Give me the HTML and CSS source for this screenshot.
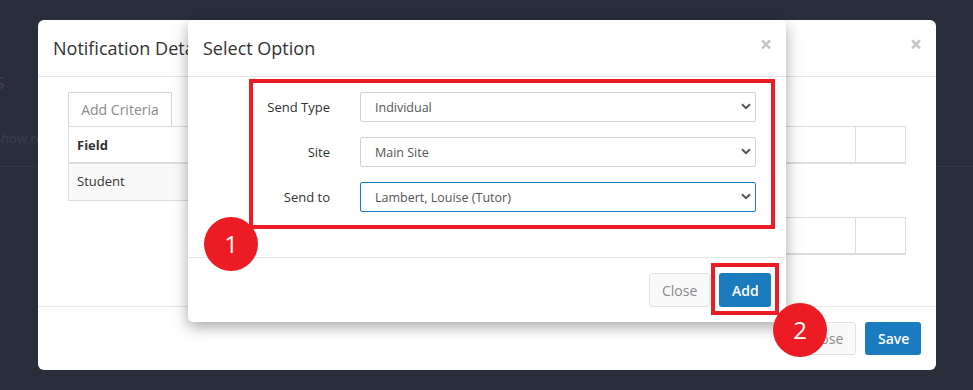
FILE: index.html
```html
<!DOCTYPE html>
<html lang="en">
<head>
    <meta charset="UTF-8">
    <meta name="viewport" content="width=device-width, initial-scale=1.0">
    <title>Notification Details - Select Option</title>
    <link rel="stylesheet" href="styles.css">
</head>
<body>

    <!-- Page behind the modals -->
    <div class="page">
        <h1 class="page-title">Notifications</h1>
        <p class="page-text">Show records</p>
        <hr class="page-rule">
    </div>

    <!-- Notification Details modal -->
    <div class="modal modal-outer">
        <div class="modal-header">
            <h4 class="modal-title">Notification Details</h4>
            <span class="close">&times;</span>
        </div>
        <div class="modal-body">
            <button class="btn btn-criteria">Add Criteria</button>
            <table class="grid grid-criteria">
                <thead>
                    <tr>
                        <th class="col-field">Field</th>
                        <th>Operator</th>
                        <th class="col-value"></th>
                        <th class="col-action"></th>
                    </tr>
                </thead>
                <tbody>
                    <tr>
                        <td class="col-field">Student</td>
                        <td class="cell-open"></td>
                        <td class="cell-open"></td>
                        <td class="cell-open"></td>
                    </tr>
                </tbody>
            </table>
            <table class="grid grid-recipients">
                <thead>
                    <tr>
                        <th></th>
                        <th class="col-action"></th>
                    </tr>
                </thead>
            </table>
        </div>
        <div class="modal-footer">
            <button class="btn btn-default">Close</button>
            <button class="btn btn-primary">Save</button>
        </div>
    </div>

    <!-- Select Option modal -->
    <div class="modal modal-inner">
        <div class="modal-header">
            <h4 class="modal-title">Select Option</h4>
            <span class="close">&times;</span>
        </div>
        <div class="modal-body">
            <form class="form-grid">
                <label for="sendType">Send Type</label>
                <div class="select-wrap">
                    <select id="sendType">
                        <option>Individual</option>
                    </select>
                    <svg class="caret" width="10" height="7" viewBox="0 0 10 7"><path d="M1 1.2 L5 5.2 L9 1.2" fill="none" stroke="#555" stroke-width="2"/></svg>
                </div>

                <label for="site">Site</label>
                <div class="select-wrap">
                    <select id="site">
                        <option>Main Site</option>
                    </select>
                    <svg class="caret" width="10" height="7" viewBox="0 0 10 7"><path d="M1 1.2 L5 5.2 L9 1.2" fill="none" stroke="#555" stroke-width="2"/></svg>
                </div>

                <label for="sendTo">Send to</label>
                <div class="select-wrap">
                    <select id="sendTo" class="focused">
                        <option>Lambert, Louise (Tutor)</option>
                    </select>
                    <svg class="caret" width="10" height="7" viewBox="0 0 10 7"><path d="M1 1.2 L5 5.2 L9 1.2" fill="none" stroke="#555" stroke-width="2"/></svg>
                </div>
            </form>
        </div>
        <div class="modal-footer">
            <button class="btn btn-default">Close</button>
            <button class="btn btn-primary">Add</button>
        </div>
    </div>

    <!-- Tutorial callouts -->
    <div class="callout-box box-one"></div>
    <div class="callout-box box-two"></div>
    <div class="step step-one">1</div>
    <div class="step step-two">2</div>

</body>
</html>
```

FILE: styles.css
```css
/* General Page Styles */
body {
    font-family: "Open Sans", "Noto Sans", Arial, sans-serif;
    margin: 0;
    padding: 0;
    width: 973px;
    height: 390px;
    overflow: hidden;
    position: relative;
    background-color: #2a2e3a;
    color: #333;
}

/* Page behind the modals */
.page {
    margin-left: -6px;
    color: #3a3e4a;
}

.page-title {
    margin: 0 0 0 -119px;
    padding-top: 68px;
    font-size: 22px;
    font-weight: normal;
    line-height: 24px;
}

.page-text {
    margin: 37px 0 0;
    font-size: 13px;
    line-height: 18px;
}

.page-rule {
    margin: 19px 0 0;
    border: none;
    border-top: 1px solid #323642;
}

/* Modals */
.modal {
    position: absolute;
    top: 20px;
    background: #fff;
    display: flex;
    flex-direction: column;
    box-sizing: border-box;
}

.modal-outer {
    left: 38px;
    width: 898px;
    height: 350px;
    border-radius: 6px;
}

.modal-inner {
    left: 188px;
    width: 598px;
    height: 302px;
    border-radius: 5px;
    box-shadow: 0 5px 15px rgba(0, 0, 0, 0.35);
}

.modal-header {
    height: 57px;
    box-sizing: border-box;
    padding: 0 15px;
    border-bottom: 1px solid #e5e5e5;
    display: flex;
    align-items: center;
    justify-content: space-between;
}

.modal-title {
    margin: 0;
    font-size: 18px;
    font-weight: normal;
    color: #333;
}

.close {
    font-size: 21px;
    font-weight: bold;
    line-height: 1;
    color: #c4c4c4;
    margin-top: -8px;
    margin-right: -1px;
}

.modal-body {
    flex: 1;
}

.modal-footer {
    border-top: 1px solid #e5e5e5;
    padding: 15px;
    display: flex;
    justify-content: flex-end;
    gap: 9px;
}

/* Buttons */
.btn {
    font-family: inherit;
    font-size: 14px;
    height: 34px;
    padding: 0 12px;
    border-radius: 3px;
    border: 1px solid transparent;
    white-space: nowrap;
    cursor: pointer;
}

.btn-default {
    background: #f9f9f9;
    border-color: #dde2e6;
    color: #8a8a8a;
}

.btn-primary {
    background: #1a7bbf;
    color: #fff;
    font-weight: 600;
}

.modal-outer .modal-footer .btn {
    height: 33px;
}

.modal-outer .btn-primary {
    width: 56px;
}

.modal-outer .btn-default {
    width: 61px;
}

.modal-inner .btn-default {
    width: 61px;
}

.modal-inner .btn-primary {
    width: 52px;
}

/* Criteria tables */
.modal-outer .modal-body {
    padding: 15px 30px;
}

.btn-criteria {
    display: block;
    width: 104px;
    padding: 0;
    background: #fff;
    border-color: #ccd6e0;
    border-bottom: none;
    border-radius: 2px 2px 0 0;
    color: #8a8a8a;
}

.grid {
    border-collapse: collapse;
    width: 100%;
    font-size: 13px;
}

.grid th,
.grid td {
    border: 1px solid #dddddd;
    padding: 0 8px;
    text-align: left;
}

.grid th {
    height: 35px;
    border-bottom: 2px solid #dddddd;
    font-weight: bold;
}

.grid td {
    height: 33px;
    padding-bottom: 3px;
}

.grid .col-field {
    width: 103px;
}

.grid .col-action {
    width: 33px;
}

.grid-criteria td.col-field {
    background: #f9f9f9;
}

.grid-criteria td.cell-open {
    border: none;
    background: #fff;
}

.grid-recipients {
    width: 420px;
    margin: 16px 0 0 auto;
}

/* Select Option form */
.modal-inner .modal-body {
    padding: 15px 30px 35px 15px;
}

.form-grid {
    display: grid;
    grid-template-columns: 127px 1fr;
    column-gap: 30px;
    row-gap: 15px;
    align-items: center;
}

.form-grid label {
    text-align: right;
    font-size: 13px;
    color: #333;
}

.select-wrap {
    position: relative;
}

.select-wrap select {
    display: block;
    width: 100%;
    height: 30px;
    padding: 0 14px;
    font-family: inherit;
    font-size: 12.5px;
    color: #555;
    background: #fff;
    border: 1px solid #ccd5de;
    border-radius: 2px;
    appearance: none;
    -webkit-appearance: none;
}

.select-wrap select.focused {
    border-color: #1a7bbf;
}

.caret {
    position: absolute;
    right: 5px;
    top: 11px;
}

/* Tutorial callouts */
.callout-box {
    position: absolute;
    border: 4px solid #ed1c24;
    box-sizing: border-box;
}

.box-one {
    left: 249px;
    top: 79px;
    width: 526px;
    height: 150px;
}

.box-two {
    left: 711px;
    top: 263px;
    width: 68px;
    height: 52px;
}

.step {
    position: absolute;
    width: 54px;
    height: 54px;
    border-radius: 50%;
    background: #ed1c24;
    color: #fff;
    font-size: 24px;
    line-height: 54px;
    text-align: center;
}

.step-one {
    left: 204px;
    top: 217px;
}

.step-two {
    left: 773px;
    top: 303px;
}
```
